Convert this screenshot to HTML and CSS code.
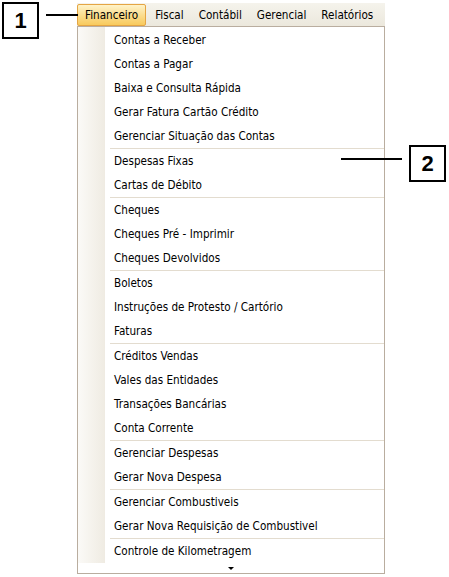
FILE: index.html
```html
<!DOCTYPE html>
<html>
<head>
<meta charset="utf-8">
<link rel="stylesheet" href="styles.css">
</head>
<body>
<div class="canvas">
  <div class="callout callout-1">1</div>
  <div class="leader leader-1"></div>
  <div class="callout callout-2">2</div>
  <div class="leader leader-2"></div>

  <div class="app">
    <div class="menubar">
      <span class="mb-item active">Financeiro</span>
      <span class="mb-item">Fiscal</span>
      <span class="mb-item">Contábil</span>
      <span class="mb-item">Gerencial</span>
      <span class="mb-item">Relatórios</span>
    </div>
    <div class="dropdown">
      <ul class="items">
        <li>Contas a Receber</li>
        <li>Contas a Pagar</li>
        <li>Baixa e Consulta Rápida</li>
        <li>Gerar Fatura Cartão Crédito</li>
        <li>Gerenciar Situação das Contas</li>
        <li class="sep"></li>
        <li>Despesas Fixas</li>
        <li>Cartas de Débito</li>
        <li class="sep"></li>
        <li>Cheques</li>
        <li>Cheques Pré - Imprimir</li>
        <li>Cheques Devolvidos</li>
        <li class="sep"></li>
        <li>Boletos</li>
        <li>Instruções de Protesto / Cartório</li>
        <li>Faturas</li>
        <li class="sep"></li>
        <li>Créditos Vendas</li>
        <li>Vales das Entidades</li>
        <li>Transações Bancárias</li>
        <li>Conta Corrente</li>
        <li class="sep"></li>
        <li>Gerenciar Despesas</li>
        <li>Gerar Nova Despesa</li>
        <li class="sep"></li>
        <li>Gerenciar Combustiveis</li>
        <li>Gerar Nova Requisição de Combustivel</li>
        <li class="sep"></li>
        <li>Controle de Kilometragem</li>
      </ul>
      <div class="scroll-down"><span class="arrow"></span></div>
    </div>
  </div>
</div>
</body>
</html>
```

FILE: styles.css
```css
html, body {
  margin: 0;
  padding: 0;
  background: #ffffff;
}

.canvas {
  position: relative;
  width: 449px;
  height: 577px;
  overflow: hidden;
  font-family: "DejaVu Sans Condensed", "DejaVu Sans", sans-serif;
  font-size: 11.6px;
  color: #000000;
}

.app {
  padding: 3px 0 0 77px;
  width: 308px;
}

.menubar {
  display: flex;
  height: 24px;
  background: linear-gradient(#f5f3ec, #ebe7dc);
  align-items: flex-start;
}

.mb-item {
  display: flex;
  align-items: center;
  height: 22px;
  padding: 0 7px 0 8px;
  margin-top: 1px;
}

.mb-item.active {
  height: 20px;
  padding: 0 7px 0 7px;
  margin-right: 1px;
  border: 1px solid #e5a543;
  border-radius: 2px;
  background: linear-gradient(#fef3c9, #fbdb8a 55%, #f8ca5d);
}

.dropdown {
  margin-top: -1px;
  border: 1px solid #b9ad9f;
  background: #ffffff;
  height: 548px;
  box-sizing: border-box;
  display: flex;
  flex-direction: column;
}

.items {
  list-style: none;
  margin: 0;
  padding: 1px 0 0 0;
  background: linear-gradient(90deg, #fbfaf7 0, #efebe2 27px, #ffffff 27px) no-repeat;
  background-size: 100% 100%;
}

.items li {
  height: 24px;
  line-height: 24px;
  padding-left: 36px;
  white-space: nowrap;
}

.items li.sep {
  height: 1px;
  margin-left: 32px;
  padding: 0;
  background: #e3dccf;
}

.scroll-down {
  flex: 1;
  display: flex;
  justify-content: center;
  align-items: center;
}

.arrow {
  width: 0;
  height: 0;
  border-left: 3px solid transparent;
  border-right: 3px solid transparent;
  border-top: 3px solid #000000;
}

.callout {
  position: absolute;
  box-sizing: border-box;
  width: 37px;
  height: 37px;
  border: 2px solid #000000;
  background: #ffffff;
  font-family: "Liberation Sans", Arial, sans-serif;
  font-weight: bold;
  font-size: 22px;
  display: flex;
  align-items: center;
  justify-content: center;
}

.callout-1 {
  left: 2px;
  top: 2px;
}

.callout-2 {
  left: 409px;
  top: 145px;
}

.leader {
  position: absolute;
  height: 2px;
  background: #000000;
}

.leader-1 {
  left: 46px;
  top: 14px;
  width: 32px;
}

.leader-2 {
  left: 341px;
  top: 158px;
  width: 61px;
}
```
